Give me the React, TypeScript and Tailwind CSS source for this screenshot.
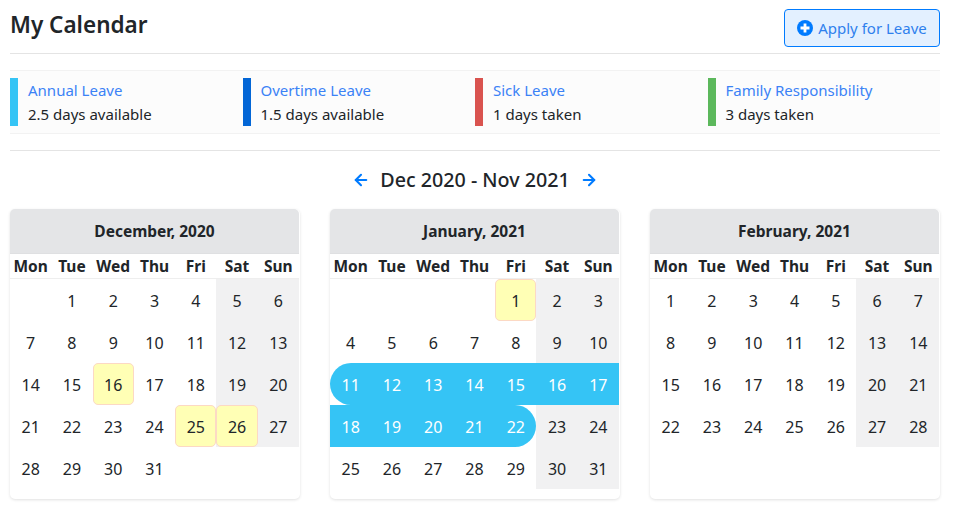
import { ArrowLeft, ArrowRight } from 'lucide-react';

const days = ['Mon', 'Tue', 'Wed', 'Thu', 'Fri', 'Sat', 'Sun'];

const legend = [
  { name: 'Annual Leave', note: '2.5 days available', bar: 'bg-[#35c4f5]' },
  { name: 'Overtime Leave', note: '1.5 days available', bar: 'bg-[#0366d6]' },
  { name: 'Sick Leave', note: '1 days taken', bar: 'bg-[#d9534f]' },
  { name: 'Family Responsibility', note: '3 days taken', bar: 'bg-[#5cb85c]' },
];

const months = [
  { title: 'December, 2020', offset: 1, count: 31, held: [16, 25, 26], from: 0, to: 0 },
  { title: 'January, 2021', offset: 4, count: 31, held: [1], from: 11, to: 22 },
  { title: 'February, 2021', offset: 0, count: 28, held: [], from: 0, to: 0 },
];

function Day({ day, column, held, from, to }: { day: number; column: number; held: boolean; from: number; to: number }) {
  const weekend = column >= 5;
  const leave = from > 0 && day >= from && day <= to;
  return (
    <div className={`h-[42px] ${weekend ? 'bg-[#f1f1f2]' : ''}`}>
      <div
        className={`flex h-full items-center justify-center pt-[2px] text-[16px] ${
          held ? 'rounded-[5px] border border-[#fcd9c4] bg-[#ffffb5]' : ''
        } ${leave ? 'bg-[#35c4f5] text-white' : 'text-[#212529]'} ${
          day === 11 && leave ? 'rounded-l-[21px]' : ''
        } ${day === 22 && leave ? 'rounded-r-[21px]' : ''}`}
      >
        {day}
      </div>
    </div>
  );
}

function Month({ title, offset, count, held, from, to }: (typeof months)[number]) {
  const numbers = Array.from({ length: count }, (_, i) => i + 1);
  return (
    <div className="h-[290px] w-[290px] rounded-[5px] bg-white shadow-[0_1px_3px_rgba(0,0,0,0.12)]">
      <div className="mr-[1px] flex h-[45px] items-center justify-center rounded-t-[5px] border-b border-[#dfe0e2] bg-[#e4e5e7] pt-[2px] text-[15.5px] font-bold text-[#212529]">
        {title}
      </div>
      <div className="mr-[1px] grid h-[25px] grid-cols-7 items-center border-b border-[#eeeeee] pt-[1px] text-center text-[15.5px] font-bold text-[#212529]">
        {days.map((d) => (
          <div key={d}>{d}</div>
        ))}
      </div>
      <div className="mr-[1px] grid grid-cols-7">
        {Array.from({ length: offset }, (_, i) => (
          <div key={i} className="h-[42px]" />
        ))}
        {numbers.map((n) => (
          <Day
            key={n}
            day={n}
            column={(n - 1 + offset) % 7}
            held={held.includes(n)}
            from={from}
            to={to}
          />
        ))}
      </div>
    </div>
  );
}

export default function App() {
  return (
    <div className="h-[512px] w-[970px] overflow-hidden bg-white font-['Noto_Sans','Open_Sans',sans-serif] text-[#212529]">
      <div className="ml-[10px] w-[930px]">
        <div className="flex h-[54px] items-start justify-between border-b border-[#e4e4e4] pt-[9px]">
          <h1 className="text-[22.5px] leading-[32px] font-semibold">My Calendar</h1>
          <button className="flex h-[38px] w-[156px] items-center justify-center gap-[5px] rounded-[4px] border border-[#007bff] bg-[#e3f0ff] text-[15px] text-[#2f80ed]">
            <svg viewBox="0 0 16 16" className="h-[16px] w-[16px]">
              <circle cx="8" cy="8" r="8" fill="#007bff" />
              <path d="M8 3.5v9M3.5 8h9" stroke="#fff" strokeWidth="2.8" />
            </svg>
            Apply for Leave
          </button>
        </div>
        <div className="mt-[16px] grid h-[64px] grid-cols-4 items-center border-y border-[#f2f2f2] bg-[#fcfcfc]">
          {legend.map((item) => (
            <div key={item.name} className="flex h-[48px] gap-[10px]">
              <div className={`w-[8px] ${item.bar}`} />
              <div className="flex flex-col justify-between text-[15px] leading-[24px]">
                <a className="text-[#3b82f6]">{item.name}</a>
                <span>{item.note}</span>
              </div>
            </div>
          ))}
        </div>
        <div className="mt-[16px] flex h-[59px] items-start justify-center gap-[10px] border-t border-[#e4e4e4] pt-[16px] text-[19.7px] leading-[26px] font-medium">
          <ArrowLeft className="mt-[4px] h-[18px] w-[18px] text-[#007bff]" strokeWidth={2.8} />
          <span>Dec 2020 - Nov 2021</span>
          <ArrowRight className="mt-[4px] h-[18px] w-[18px] text-[#007bff]" strokeWidth={2.8} />
        </div>
        <div className="flex justify-between">
          {months.map((m) => (
            <Month key={m.title} {...m} />
          ))}
        </div>
      </div>
    </div>
  );
}
